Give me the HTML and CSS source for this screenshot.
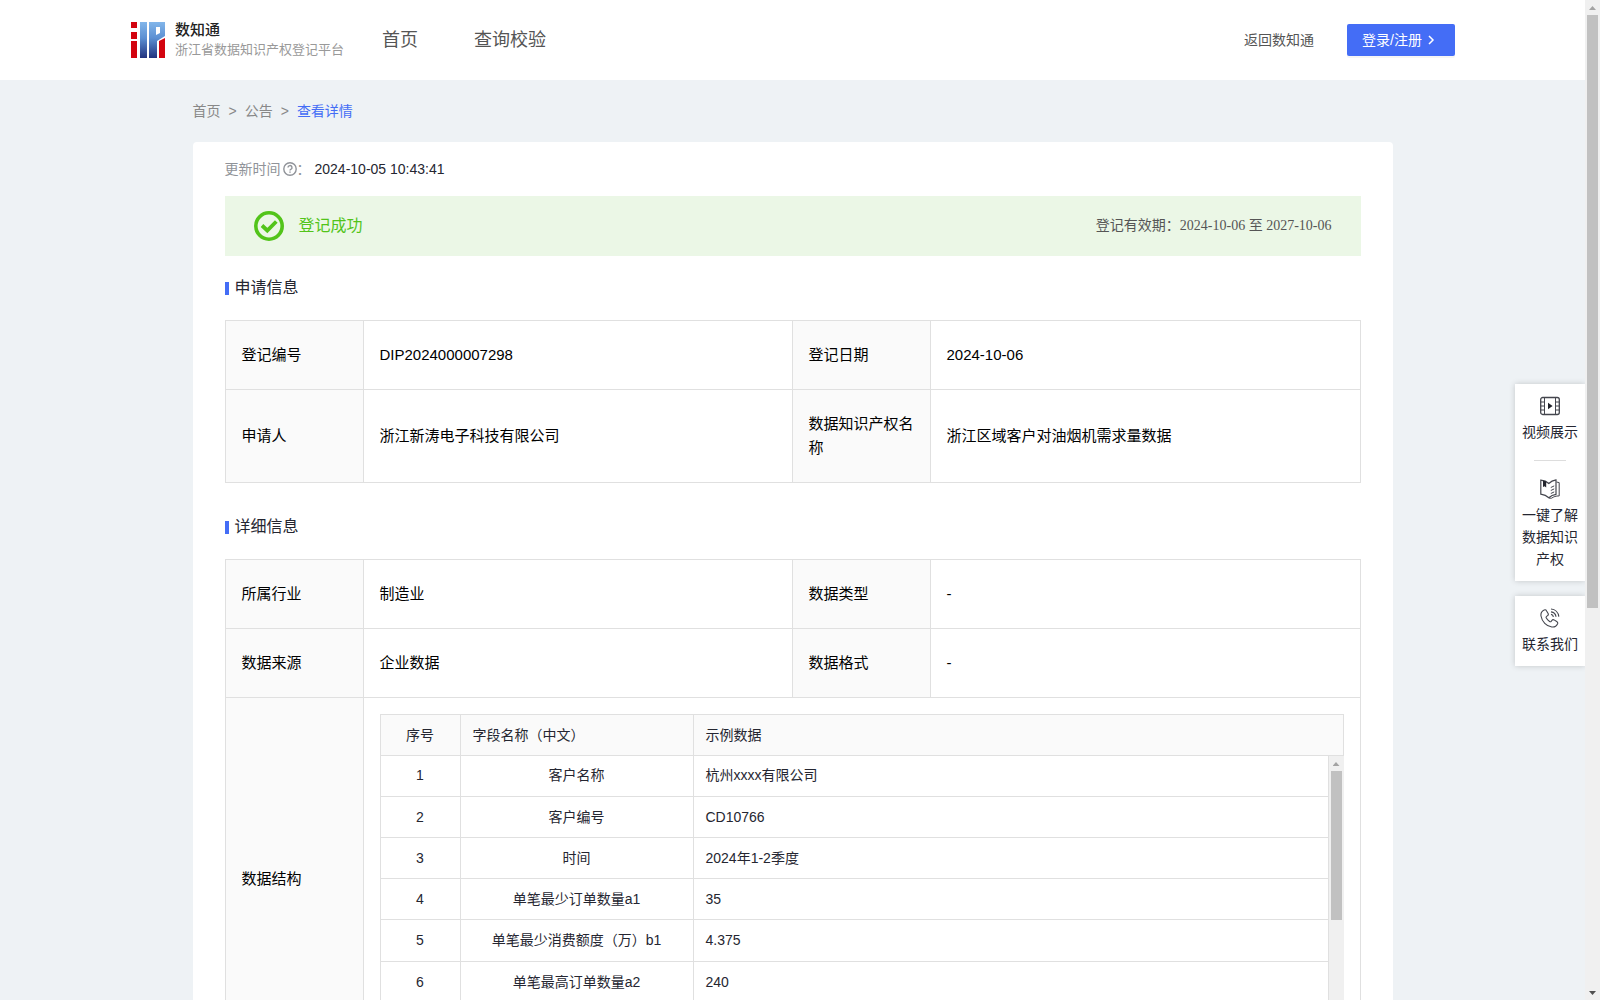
FILE: index.html
```html
<!DOCTYPE html>
<html lang="zh-CN">
<head>
  <meta charset="UTF-8">
  <title>浙江省数据知识产权登记平台</title>
  <link rel="stylesheet" href="styles.css">
</head>
<body>
  <div class="page">
    <header class="header">
      <a class="logo" href="#">
        <svg class="logo-img" viewBox="0 0 34 36">
          <defs>
            <linearGradient id="blue" x1="0" y1="0" x2="0" y2="1">
              <stop offset="0" stop-color="#82b6ea"/>
              <stop offset="0.45" stop-color="#5b8fd2"/>
              <stop offset="1" stop-color="#22337f"/>
            </linearGradient>
          </defs>
          <path fill="#d3040f" d="M0 0h6v6H0zM0 10h6v7H0zM0 19h6v17H0zM28 19l6-3v20h-6z"/>
          <path fill="url(#blue)" d="M9 0h7v36H9zM18 0h16v14l-8 5v17h-8zM25 5v8l4-2V5z" fill-rule="evenodd"/>
        </svg>
        <span class="logo-text">
          <strong>数知通</strong>
          <span>浙江省数据知识产权登记平台</span>
        </span>
      </a>
      <nav class="nav">
        <a href="#">首页</a>
        <a href="#">查询校验</a>
      </nav>
      <div class="header-right">
        <a href="#">返回数知通</a>
        <button class="login-btn" type="button">登录/注册
          <svg viewBox="0 0 8 10"><path d="M2 1l4 4-4 4" fill="none" stroke="#fff" stroke-width="1.5"/></svg>
        </button>
      </div>
    </header>

    <main class="main">
      <nav class="breadcrumb">
        <a href="#">首页</a>
        <span>&gt;</span>
        <a href="#">公告</a>
        <span>&gt;</span>
        <a class="current" href="#">查看详情</a>
      </nav>

      <div class="card">
        <div class="update">
          <span>更新时间</span>
          <svg viewBox="0 0 14 14">
            <circle cx="7" cy="7" r="6.2" fill="none" stroke="#909399" stroke-width="1.4"/>
            <path d="M5 5.6a2 2 0 1 1 2.8 1.8c-.6.3-.8.5-.8 1.1M7 9.6v1.200" fill="none" stroke="#909399" stroke-width="1.400"/>
          </svg>
          <span>：</span>
          <time>2024-10-05 10:43:41</time>
        </div>

        <div class="status">
          <svg viewBox="0 0 30 30">
            <circle cx="15" cy="15" r="13.2" fill="none" stroke="#52c41a" stroke-width="3.6"/>
            <path d="M8 14.500l5.300 5 9-9" fill="none" stroke="#52c41a" stroke-width="3.800"/>
          </svg>
          <span class="status-text">登记成功</span>
          <span class="validity">登记有效期：2024-10-06 至 2027-10-06</span>
        </div>

        <h2 class="title">申请信息</h2>
        <table class="info">
          <colgroup><col class="c-label"><col class="c-value"><col class="c-label"><col></colgroup>
          <tr>
            <th>登记编号</th><td>DIP2024000007298</td>
            <th>登记日期</th><td>2024-10-06</td>
          </tr>
          <tr>
            <th>申请人</th><td>浙江新涛电子科技有限公司</td>
            <th>数据知识产权名称</th><td>浙江区域客户对油烟机需求量数据</td>
          </tr>
        </table>

        <h2 class="title">详细信息</h2>
        <table class="info">
          <colgroup><col class="c-label"><col class="c-value"><col class="c-label"><col></colgroup>
          <tr>
            <th>所属行业</th><td>制造业</td>
            <th>数据类型</th><td>-</td>
          </tr>
          <tr>
            <th>数据来源</th><td>企业数据</td>
            <th>数据格式</th><td>-</td>
          </tr>
          <tr>
            <th>数据结构</th>
            <td class="nested" colspan="3">
              <table class="fields">
                <colgroup><col class="c-num"><col class="c-name"><col></colgroup>
                <tr><th class="center">序号</th><th>字段名称（中文）</th><th>示例数据</th></tr>
              </table>
              <div class="fields-scroll">
                <table class="fields">
                  <colgroup><col class="c-num"><col class="c-name"><col></colgroup>
                  <tr><td>1</td><td>客户名称</td><td>杭州xxxx有限公司</td></tr>
                  <tr><td>2</td><td>客户编号</td><td>CD10766</td></tr>
                  <tr><td>3</td><td>时间</td><td>2024年1-2季度</td></tr>
                  <tr><td>4</td><td>单笔最少订单数量a1</td><td>35</td></tr>
                  <tr><td>5</td><td>单笔最少消费额度（万）b1</td><td>4.375</td></tr>
                  <tr><td>6</td><td>单笔最高订单数量a2</td><td>240</td></tr>
                  <tr><td></td><td></td><td></td></tr>
                </table>
                <div class="scrollbar">
                  <span class="arrow-up"></span>
                  <div class="track"><div class="thumb thumb-fields"></div></div>
                  <span class="arrow-down"></span>
                </div>
              </div>
            </td>
          </tr>
        </table>
      </div>
    </main>

    <aside class="side">
      <div class="side-box">
        <a href="#">
          <svg viewBox="0 0 20 20" fill="none" stroke="#44464e">
            <rect x="0.7" y="1.5" width="18.6" height="17" rx="2" stroke-width="1.3"/>
            <path d="M4.5 1.5v17M15.5 1.5v17M.7 6h3.8M.7 10h3.8M.7 14h3.8M15.5 6h3.8M15.5 10h3.8M15.5 14h3.8"/>
            <path d="M8 6.8v6.4l4.6-3.2z" fill="#22242c" stroke="none"/>
          </svg>
          视频展示
        </a>
        <hr>
        <a href="#">
          <svg viewBox="0 0 20 20" fill="none" stroke="#44464e">
            <path d="M.8 1.200c3.500.3 6 1.400 8 3.300 2-2 4.200-3.100 7.200-3.600v14.400c-3 .4-5.200 1.500-7.200 3.400C6.800 16.800 4 15.600.8 15.200z" stroke-width="1.200"/>
            <path d="M16.500 3l2.700.6v13.300c-3.300 0-5.600.8-7.600 2.300h-2.500M10.800 8.500l3.400-1.600M10.800 11.500l3.400-1.600M10.800 14.500l3.400-1.600"/>
            <path d="M3 1.500l3.200 1v6L4.600 7.200 3 8z" fill="#22242c" stroke="none"/>
          </svg>
          一键了解数据知识产权
        </a>
      </div>
      <div class="side-box">
        <a href="#">
          <svg viewBox="0 0 20 20" fill="none" stroke="#44464e">
            <path d="M4.200 2C2 3 .6 5.200 1 8c.9 5.500 5.500 10.200 10.800 11 2.600.3 4.800-1 5.800-3.300.4-1-.1-1.700-.9-2.200l-2.600-1.600c-.9-.5-1.700-.2-2.300.6l-.6.800c-.5.6-1 .6-1.600.2-1.400-.9-2.500-2.100-3.300-3.500-.4-.6-.2-1.200.3-1.600l1-.8c.7-.5.9-1.300.5-2.100L6.600 2.900C6.100 1.900 5.200 1.600 4.200 2z" stroke-width="1.100"/>
            <path d="M11 1c4.200.3 7.300 3.400 7.800 7.600M11 3.800c2.700.3 4.700 2.200 5 4.900M11 6.400c1.300.2 2.200 1.100 2.400 2.400" stroke-width="1.200"/>
          </svg>
          联系我们
        </a>
      </div>
    </aside>
  </div>

  <div class="scrollbar">
    <span class="arrow-up"></span>
    <div class="track"><div class="thumb thumb-page"></div></div>
    <span class="arrow-down"></span>
  </div>
</body>
</html>
```
FILE: styles.css
```css
* { box-sizing: border-box; }
body { display: flex; height: 100vh; margin: 0; overflow: hidden; background: #eef2f5; color: #252631; font: 14px/22px "Liberation Sans", "Noto Sans CJK SC", sans-serif; }
a { color: inherit; text-decoration: none; }

.page { position: relative; flex: 1; min-width: 0; overflow: hidden; }

.header { display: flex; align-items: center; height: 80px; padding: 0 130px 0 131px; background: #fff; color: #555; }
.logo { display: flex; align-items: center; gap: 10px; }
.logo-img { width: 34px; height: 36px; }
.logo-text { display: flex; flex-direction: column; font-size: 13px; line-height: 20px; color: #999; }
.logo-text strong { font-size: 15px; font-weight: 500; color: #222; }
.nav { display: flex; gap: 56px; margin-left: 38px; font-size: 18px; }
.header-right { display: flex; align-items: center; gap: 33px; margin-left: auto; }
.login-btn { display: flex; align-items: center; gap: 5px; width: 108px; height: 32px; padding: 0 15px; border: none; border-radius: 2px; background: #446df6; box-shadow: 0 2px 0 rgba(0, 0, 0, 0.04); color: #fff; font: inherit; cursor: pointer; }
.login-btn svg { width: 8px; height: 10px; }

.main { max-width: 1200px; margin: 0 auto; }
.breadcrumb { display: flex; gap: 8px; padding: 20px 0; color: #888; }
.breadcrumb .current { color: #446df6; }

.card { padding: 16px 32px 32px; border-radius: 4px; background: #fff; }
.update { display: flex; align-items: center; color: #909399; }
.update svg { width: 14px; height: 14px; margin-left: 2px; }
.update time { margin-left: 4px; color: #252631; }

.status { display: flex; align-items: center; height: 60px; margin-top: 16px; padding: 0 29px; background: #ebf7e6; }
.status svg { width: 30px; height: 30px; }
.status-text { margin-left: 15px; font-size: 16px; color: #52c41a; }
.validity { margin-left: auto; color: #555; font-family: "Liberation Serif", "Noto Sans CJK SC", serif; }

.title { display: flex; align-items: center; gap: 6px; margin: 20px 0; font-size: 16px; font-weight: 400; line-height: 24px; }
.title::before { content: ""; width: 4px; height: 13px; background: #446df6; }
.info + .title { margin-top: 32px; }

table { width: 100%; border-collapse: collapse; table-layout: fixed; }
th, td { border: 1px solid #e0e0e0; text-align: left; font-weight: 400; }
th { background: #fafafa; }
.info { color: #000; font-size: 15px; line-height: 24px; }
.info th, .info td { padding: 22px 16px; }
.c-label { width: 138px; }
.c-value { width: 429px; }

.info .nested { padding: 16px; }
.fields { color: #252631; font-size: 14px; line-height: 22px; }
.info .fields th, .info .fields td { height: 41px; padding: 9px 12px; }
.c-num { width: 80px; }
.c-name { width: 233px; }
.fields .center, .fields td:nth-child(-n+2) { text-align: center; }
.fields-scroll { display: flex; height: 288px; overflow: hidden; }
.fields-scroll .fields { flex: 1; width: auto; min-width: 0; }
.info .fields-scroll tr:first-child td { height: 40px; padding-top: 8px; border-top: none; }

.scrollbar { display: flex; flex: none; flex-direction: column; align-items: center; width: 15px; background: #f0f0f0; }
.track { flex: 1; width: 11px; }
.thumb { background: #c1c1c1; }
.thumb-page { height: 61.1%; }
.thumb-fields { height: 149px; }
.arrow-up, .arrow-down { width: 7px; height: 4px; margin: 6px 0 5px; background: #a3a3a3; clip-path: polygon(50% 0, 100% 100%, 0 100%); }
.arrow-down { background: #505050; clip-path: polygon(0 0, 100% 0, 50% 100%); }

.side { position: absolute; top: 384px; right: 0; display: flex; flex-direction: column; gap: 15px; width: 70px; }
.side-box { padding: 12px 7px 11px; background: #fff; box-shadow: 0 0 6px rgba(0, 0, 0, 0.18); text-align: center; }
.side-box a { display: block; }
.side-box svg { display: block; width: 20px; height: 20px; margin: 0 auto 5px; }
.side-box hr { width: 32px; margin: 17px auto 18px; border: none; border-top: 1px solid #ddd; }
```
